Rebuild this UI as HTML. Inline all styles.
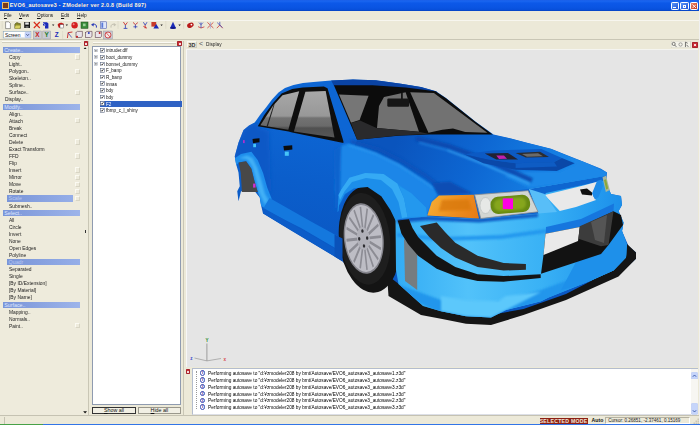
<!DOCTYPE html>
<html><head><meta charset="utf-8"><title>ZModeler</title>
<style>
html,body{margin:0;padding:0;}
body{width:700px;height:425px;overflow:hidden;background:#ECE9D8;position:relative;font-family:"Liberation Sans",sans-serif;font-size:5.3px;color:#111;line-height:6px;}
div{position:absolute;box-sizing:border-box;white-space:nowrap;}
.sv{position:absolute;}
u{text-decoration-thickness:0.45px;text-underline-offset:0.6px;}
#title{left:0;top:0;width:700px;height:11px;background:linear-gradient(#1a5ee8 0%,#1a66f0 10%,#0c58e8 28%,#0a55e3 65%,#0850dc 86%,#0542c0 100%);}
#title .tx{left:9.7px;top:1.7px;color:#fff;font-weight:bold;font-size:5.5px;letter-spacing:0.2px;line-height:7px;text-shadow:0.4px 0.4px 0 #0a2a80;}
#menu{left:0;top:11px;width:700px;height:8.5px;background:#ECE9D8;}
#menu span{position:absolute;top:1.2px;font-size:5.6px;transform:scaleX(.84);transform-origin:0 0;}
#tb1{left:0;top:19.5px;width:700px;height:10.5px;background:#ECE9D8;border-top:0.5px solid #f7f6ef;}
#tb2{left:0;top:30px;width:700px;height:10px;background:#ECE9D8;border-bottom:0.5px solid #c9c6b5;}
#leftp{left:0;top:40px;width:88px;height:375px;background:#EEEBDC;}
.hd{left:2.5px;width:77.5px;height:6.2px;background:linear-gradient(90deg,#7a95d8,#9db4ea);color:#dfe8ff;padding-left:1.8px;font-size:5.3px;line-height:6.2px;}
.hl{left:6.5px;height:6.2px;background:linear-gradient(90deg,#7a95d8,#95aee8);color:#b9c9f2;padding-left:2.1px;font-size:5.3px;line-height:6.2px;}
.it{height:6.2px;line-height:6.2px;font-size:5.5px;color:#1a1a1a;transform:scaleX(.89);transform-origin:0 0;}
.sb{left:74.8px;width:5.4px;height:5.4px;border:0.5px solid #d8d5c4;border-top-color:#fbfaf2;border-left-color:#fbfaf2;background:#EEEBDC;}
#tree{left:91.8px;top:46.4px;width:89.7px;height:358.6px;background:#fff;border:0.5px solid #8f9bb0;}
.tsel{left:6.8px;width:82.2px;height:6.4px;background:#2f62c4;}
.tex{left:1.2px;width:3.6px;height:3.6px;border:0.5px solid #8a97ad;background:#fff;}
.tex:after{content:"";position:absolute;left:0.6px;top:1px;width:1.5px;height:0.6px;background:#333;}
.tcb{left:7.6px;width:4.4px;height:4.4px;border:0.5px solid #4a5a7a;background:#fff;}
.tcb:after{content:"";position:absolute;left:1.1px;top:0px;width:1px;height:2.2px;border-right:0.7px solid #111;border-bottom:0.7px solid #111;transform:rotate(42deg);}
.tt{left:13px;font-size:5.5px;line-height:6.2px;color:#111;transform:scaleX(.83);transform-origin:0 0;}
.tw{color:#fff;}
.xbtn{width:4.6px;height:4.6px;background:#cc3038;border:0.5px solid #a8242c;border-radius:0.8px;}
.xbtn:after{content:"";position:absolute;left:0.8px;top:0.8px;width:2px;height:2px;background:#fff;opacity:.85;border-radius:.3px}
.btn{height:6.6px;background:#f1efe4;border:0.5px solid #9a988c;font-size:5.3px;line-height:5.6px;text-align:center;color:#111;}
#vp{left:185.5px;top:48.5px;width:512.5px;height:318.5px;overflow:hidden;background:#e5e5e5;border-left:0.5px solid #f6f6f6;border-top:0.8px solid #f4f4f0;}
#vph{left:185.5px;top:40.5px;width:512.5px;height:8px;background:#ECE9D8;}
#log{left:191.5px;top:368.3px;width:506px;height:46.8px;background:#fff;border:0.5px solid #b4bdce;border-bottom-color:#dcdfe6;}
.li{left:7.4px;width:5.4px;height:5.4px;border:0.6px solid #3a4ab4;border-radius:50%;color:#1a2a90;font-size:4.6px;line-height:4.2px;text-align:center;font-weight:bold;background:#fff;}
.lt{left:15.8px;font-size:5.3px;line-height:6.2px;color:#000;transform:scaleX(.9);transform-origin:0 0;}
#status{left:0;top:415.2px;width:700px;height:8px;background:#ECE9D8;border-top:0.5px solid #c5c2b2;}
#task{left:0;top:423.5px;width:700px;height:1.5px;background:linear-gradient(#3f8cf3,#245edb);}
</style></head><body>
<div id="title"><div style="left:2px;top:2px;width:6.5px;height:6.5px;background:#7a3a1a;border:0.5px solid #e8c070"></div><div class="tx">EVO6_autosave3 - ZModeler ver 2.0.8 (Build 897)</div>
<div style="left:670.6px;top:1.5px;width:8.2px;height:8.2px;border-radius:1.2px;border:0.5px solid #fff;background:linear-gradient(135deg,#5a94f6,#2458d8)"><div style="left:1.6px;top:4.6px;width:2.8px;height:1.1px;background:#fff"></div></div>
<div style="left:680.2px;top:1.5px;width:8.4px;height:8.2px;border-radius:1.2px;border:0.5px solid #fff;background:linear-gradient(135deg,#5a94f6,#2458d8)"><div style="left:1.6px;top:2.3px;width:3px;height:2.8px;border:0.6px solid #fff;border-top-width:1px"></div></div>
<div style="left:689.6px;top:1.5px;width:8.4px;height:8.2px;border-radius:1.2px;border:0.5px solid #fff;background:linear-gradient(135deg,#e8866a,#c8381c)"><svg style="position:absolute;left:1.2px;top:1.2px" width="4.6" height="4.6" viewBox="0 0 4.6 4.6"><path d="M0.5 0.5L4.1 4.1M4.1 0.5L0.5 4.1" stroke="#fff" stroke-width="0.9"/></svg></div>
</div>
<div id="menu"><span style="left:3.6px"><u>F</u>ile</span><span style="left:19px"><u>V</u>iew</span><span style="left:36.5px"><u>O</u>ptions</span><span style="left:60.5px"><u>E</u>dit</span><span style="left:76.5px"><u>H</u>elp</span></div>
<div id="tb1"></div><div id="tb2"></div>
<svg style="position:absolute;left:0;top:19px" width="232" height="22" viewBox="0 19 232 22">
<g fill="none" stroke="#b9b6a6" stroke-width="0.5" stroke-dasharray="0.6 0.6"><path d="M2.2 21.5v7.5M118 21.5v7.5M165.8 21.5v7.5M183.6 21.5v7.5M2.2 31.5v7.5M62.6 31.5v7.5"/></g>
<!-- toolbar 1 -->
<path d="M5.6 21.8h3.2l1.6 1.6v5.2H5.6z" fill="#fff" stroke="#444" stroke-width="0.5"/>
<path d="M14.8 24.2l1.4-1.4h2l.6.8h1.6v4.8h-5.6z" fill="#8a8a2a" stroke="#3a3a10" stroke-width="0.5"/><path d="M15.6 25.6h5l-1 2.8h-4.8z" fill="#d8d060"/>
<rect x="24.2" y="22" width="5.8" height="6" fill="#1a1a1a"/><rect x="25.2" y="22.4" width="3.6" height="2.2" fill="#e8e8e8"/><rect x="25.6" y="26" width="3" height="2" fill="#666"/>
<path d="M33.8 22l6 6M39.8 22l-6 6" stroke="#d82a1a" stroke-width="1.1"/>
<path d="M43 22.2h4l1.4 1.4v4.8H45v-3h-2z" fill="#1a2ab8"/><path d="M43 23l2.6 2.2" stroke="#fff" stroke-width="0.6"/><path d="M52 24.6h2.4l-1.2 1.4z" fill="#222"/>
<path d="M57.6 24.8c1-2.6 4.8-2.8 6.4-.6l-1 3.6h-4.2z" fill="#c81a1a"/><rect x="60" y="24.6" width="3.6" height="3.4" fill="#fff" stroke="#444" stroke-width="0.4"/><path d="M65.6 24.6h2.4l-1.2 1.4z" fill="#222"/>
<circle cx="74.6" cy="25.2" r="3.2" fill="#d42020"/><circle cx="73.6" cy="24.2" r="1" fill="#f08a8a"/>
<rect x="81" y="22" width="7" height="6.4" fill="#3a8a3a" stroke="#1a4a1a" stroke-width="0.5"/><rect x="83" y="23.6" width="2.6" height="2.6" fill="#9ad09a"/>
<path d="M96.4 27.6c.6-2.6-1.4-4-3.6-3.2" fill="none" stroke="#2a3ab8" stroke-width="1"/><path d="M91 24.8l2.6-1.8v3.4z" fill="#2a3ab8"/>
<rect x="100.6" y="21.8" width="6" height="6.8" fill="#dfe6fa" stroke="#3a4aa8" stroke-width="0.5"/><rect x="101.4" y="22.6" width="1.8" height="5.2" fill="#5a7ad8"/>
<path d="M111 27.6c-.6-2.6 1.4-4 3.6-3.2" fill="none" stroke="#c4c1b2" stroke-width="1"/><path d="M116.4 24.8l-2.6-1.8v3.4z" fill="#c4c1b2"/>
<g stroke-width="0.8" fill="none"><path d="M123.4 22l2 3 2-2.6" stroke="#c82020"/><path d="M125.4 25v3.4M123.6 28.400h3.800" stroke="#2a3ab8"/>
<path d="M133 22.400l2.400 2.200 2.400-2" stroke="#c82020"/><path d="M135.400 24.600v3.800M133.400 26.800h4" stroke="#2a3ab8"/>
<path d="M143.400 22.200l1.800 3 1.800-3" stroke="#2a3ab8"/><path d="M145.200 25.200v3.200M143.400 26.400l3.600 1.800" stroke="#c82020"/></g>
<rect x="151.400" y="22" width="4.800" height="4.600" fill="#c83a2a"/><path d="M153.400 28.600l2.800-4.600 2.800 4.600z" fill="#1a2ab8"/><path d="M160.400 24.600h2.400l-1.200 1.400z" fill="#222"/>
<path d="M170 28.200l3-6.400 3 6.400z" fill="#1a2ab8"/><ellipse cx="173" cy="28" rx="3" ry="0.900" fill="#10188a"/><path d="M178.400 24.600h2.400l-1.200 1.400z" fill="#222"/>
<ellipse cx="190.400" cy="25.200" rx="3.400" ry="2.400" fill="#b81a1a" transform="rotate(-25 190.400 25.200)"/><circle cx="191.400" cy="24.600" r="0.900" fill="#fff"/>
<g stroke-width="0.700" fill="none"><path d="M198 26.600l3 1.400 3.400-1.200" stroke="#c82020"/><path d="M201 28v-5.600M199 22.600l2 2 2-2" stroke="#2a3ab8"/>
<path d="M207.400 22.400l6 5.600M213.400 22.400l-6 5.600" stroke="#c82020"/><path d="M210.400 22v6.600" stroke="#9aa2d8"/>
<path d="M216.800 28.200l3-3.200 3 3.200" stroke="#c82020"/><path d="M219.800 25v-3.200M217.200 22.600l5.200 5" stroke="#2a3ab8"/></g>
<!-- toolbar 2 -->
<rect x="3.500" y="31.600" width="27.400" height="6.400" fill="#fff" stroke="#7f9db9" stroke-width="0.500"/>
<rect x="25" y="32.200" width="5.400" height="5.200" rx="0.800" fill="#c6d4fb" stroke="#9ab0e8" stroke-width="0.400"/><path d="M26.400 34.200l1.300 1.400 1.300-1.400" stroke="#2a3a6a" stroke-width="0.800" fill="none"/>
<text x="5" y="36.500" font-family="Liberation Sans, sans-serif" font-size="5.200" fill="#111" textLength="15.500" lengthAdjust="spacingAndGlyphs">Screen</text>
<rect x="33.400" y="31" width="7.800" height="8" fill="#c9cad2" stroke="#8a8a96" stroke-width="0.400"/>
<rect x="42.800" y="31" width="7.800" height="8" fill="#c9cad2" stroke="#8a8a96" stroke-width="0.400"/>
<rect x="103.600" y="31" width="8.800" height="8" fill="#c9cad2" stroke="#8a8a96" stroke-width="0.400"/>
<g font-family="Liberation Sans, sans-serif" font-size="6.400" font-weight="bold" text-anchor="middle"><text x="37.300" y="37.400" fill="#c81a1a">X</text><text x="46.700" y="37.400" fill="#1a7a2a">Y</text><text x="56.600" y="37.400" fill="#1a2ab8">Z</text></g>
<path d="M67.400 38l.800-5.400 4.200-.600" stroke="#c82020" stroke-width="0.900" fill="none"/><path d="M68 32.800l3.800 4.800" stroke="#2a3ab8" stroke-width="0.700"/>
<g fill="#e9e4ea" stroke="#5a3a4a" stroke-width="0.600"><rect x="76" y="32.600" width="5" height="5"/><path d="M76 32.600l1.400-1.200h5v5l-1.400 1.200"/>
<rect x="85.600" y="32.600" width="5" height="5"/><path d="M85.600 32.600l1.400-1.200h5v5l-1.400 1.200"/>
<rect x="95.200" y="32.600" width="5" height="5"/><path d="M95.200 32.600l1.400-1.200h5v5l-1.400 1.200"/></g>
<circle cx="108" cy="35" r="3" fill="#f6e6e6" stroke="#c83030" stroke-width="0.800"/><path d="M106 32.600l4.200 4.600" stroke="#c83030" stroke-width="0.700"/>
<circle cx="77" cy="36.800" r="1" fill="#c82020"/><circle cx="88.800" cy="33" r="1" fill="#2a3ab8"/><circle cx="99.600" cy="33" r="1" fill="#c82020"/>
</svg>

<div id="leftp">
<div style="left:0;top:0;width:83px;height:375px">
</div>
</div>
<div style="left:0;top:0;width:88px;height:420px">
<div class="hd" style="top:47.00px">Create..</div>
<div class="it" style="top:54.07px;left:8.6px">Copy</div>
<div class="sb" style="top:54.37px"></div>
<div class="it" style="top:61.14px;left:8.6px">Light..</div>
<div class="it" style="top:68.21px;left:8.6px">Polygon..</div>
<div class="sb" style="top:68.51px"></div>
<div class="it" style="top:75.28px;left:8.6px">Skeleton..</div>
<div class="it" style="top:82.35px;left:8.6px">Spline..</div>
<div class="it" style="top:89.42px;left:8.6px">Surface..</div>
<div class="sb" style="top:89.72px"></div>
<div class="it" style="top:96.49px;left:4.8px">Display..</div>
<div class="hd" style="top:103.56px">Modify..</div>
<div class="it" style="top:110.63px;left:8.6px">Align..</div>
<div class="it" style="top:117.70px;left:8.6px">Attach</div>
<div class="sb" style="top:118.00px"></div>
<div class="it" style="top:124.77px;left:8.6px">Break</div>
<div class="it" style="top:131.84px;left:8.6px">Connect</div>
<div class="it" style="top:138.91px;left:8.6px">Delete</div>
<div class="sb" style="top:139.21px"></div>
<div class="it" style="top:145.98px;left:8.6px">Exact Transform</div>
<div class="it" style="top:153.05px;left:8.6px">FFD</div>
<div class="sb" style="top:153.35px"></div>
<div class="it" style="top:160.12px;left:8.6px">Flip</div>
<div class="it" style="top:167.19px;left:8.6px">Insert</div>
<div class="sb" style="top:167.49px"></div>
<div class="it" style="top:174.26px;left:8.6px">Mirror</div>
<div class="sb" style="top:174.56px"></div>
<div class="it" style="top:181.33px;left:8.6px">Move</div>
<div class="sb" style="top:181.63px"></div>
<div class="it" style="top:188.40px;left:8.6px">Rotate</div>
<div class="sb" style="top:188.70px"></div>
<div class="hl" style="top:195.47px;width:66.5px">Scale</div>
<div class="sb" style="top:195.77px"></div>
<div class="it" style="top:202.54px;left:8.6px">Submesh..</div>
<div class="hd" style="top:209.61px">Select..</div>
<div class="it" style="top:216.68px;left:8.6px">All</div>
<div class="it" style="top:223.75px;left:8.6px">Circle</div>
<div class="it" style="top:230.82px;left:8.6px">Invert</div>
<div class="it" style="top:237.89px;left:8.6px">None</div>
<div class="it" style="top:244.96px;left:8.6px">Open Edges</div>
<div class="it" style="top:252.03px;left:8.6px">Polyline</div>
<div class="hl" style="top:259.10px;width:73.5px">Quadr</div>
<div class="it" style="top:266.17px;left:8.6px">Separated</div>
<div class="it" style="top:273.24px;left:8.6px">Single</div>
<div class="it" style="top:280.31px;left:8.6px">[By ID/Extension]</div>
<div class="it" style="top:287.38px;left:8.6px">[By Material]</div>
<div class="it" style="top:294.45px;left:8.6px">[By Name]</div>
<div class="hd" style="top:301.52px">Surface..</div>
<div class="it" style="top:308.59px;left:8.6px">Mapping..</div>
<div class="it" style="top:315.66px;left:8.6px">Normals..</div>
<div class="it" style="top:322.73px;left:8.6px">Paint..</div>
<div class="sb" style="top:323.03px"></div>
<div class="xbtn" style="left:83.6px;top:41.3px"></div>
<svg class="sv" style="left:83.2px;top:46.6px" width="4.2" height="2.8" viewBox="0 0 4.2 2.8"><path d="M0.200 2.600L2.100 0.300L4 2.600Z" fill="#111"/></svg>
<div style="left:2px;top:41.2px;width:79px;height:1.6px;border-top:0.5px solid #fbfaf4;border-bottom:0.5px solid #d2cfbe"></div>
<div style="left:93px;top:41.6px;width:83px;height:1.6px;border-top:0.5px solid #fbfaf4;border-bottom:0.5px solid #d2cfbe"></div>
<svg class="sv" style="left:83.2px;top:410.8px" width="4.2" height="2.8" viewBox="0 0 4.2 2.8"><path d="M0.200 0.300L2.100 2.600L4 0.300Z" fill="#111"/></svg>
<div style="left:84.6px;top:229.6px;width:1.6px;height:3.2px;background:#333"></div>
<div style="left:88.2px;top:40.5px;width:1.2px;height:374px;background:#f8f7f0;border-right:0.5px solid #c9c6b5"></div>
</div>
<div id="tree">
<svg class="sv" style="left:1.2px;top:1.30px" width="3.8" height="3.8" viewBox="0 0 3.8 3.8"><rect x="0.25" y="0.25" width="3.3" height="3.3" fill="#fff" stroke="#9aa4b6" stroke-width="0.5"/><path d="M1 1.9h1.8M1.9 1v1.8" stroke="#333" stroke-width="0.5"/></svg>
<svg class="sv" style="left:7.6px;top:0.90px" width="4.6" height="4.6" viewBox="0 0 4.6 4.6"><rect x="0.3" y="0.3" width="4" height="4" fill="#fff" stroke="#56637e" stroke-width="0.55"/><path d="M1.1 2.3L1.9 3.3L3.5 1.2" stroke="#111" stroke-width="0.75" fill="none"/></svg>
<div class="tt" style="top:0.10px">intruder.dff</div>
<svg class="sv" style="left:1.2px;top:7.94px" width="3.8" height="3.8" viewBox="0 0 3.8 3.8"><rect x="0.25" y="0.25" width="3.3" height="3.3" fill="#fff" stroke="#9aa4b6" stroke-width="0.5"/><path d="M1 1.9h1.8M1.9 1v1.8" stroke="#333" stroke-width="0.5"/></svg>
<svg class="sv" style="left:7.6px;top:7.54px" width="4.6" height="4.6" viewBox="0 0 4.6 4.6"><rect x="0.3" y="0.3" width="4" height="4" fill="#fff" stroke="#56637e" stroke-width="0.55"/><path d="M1.1 2.3L1.9 3.3L3.5 1.2" stroke="#111" stroke-width="0.75" fill="none"/></svg>
<div class="tt" style="top:6.74px">boot_dummy</div>
<svg class="sv" style="left:1.2px;top:14.58px" width="3.8" height="3.8" viewBox="0 0 3.8 3.8"><rect x="0.25" y="0.25" width="3.3" height="3.3" fill="#fff" stroke="#9aa4b6" stroke-width="0.5"/><path d="M1 1.9h1.8M1.9 1v1.8" stroke="#333" stroke-width="0.5"/></svg>
<svg class="sv" style="left:7.6px;top:14.18px" width="4.6" height="4.6" viewBox="0 0 4.6 4.6"><rect x="0.3" y="0.3" width="4" height="4" fill="#fff" stroke="#56637e" stroke-width="0.55"/><path d="M1.1 2.3L1.9 3.3L3.5 1.2" stroke="#111" stroke-width="0.75" fill="none"/></svg>
<div class="tt" style="top:13.38px">bonnet_dummy</div>
<svg class="sv" style="left:7.6px;top:20.82px" width="4.6" height="4.6" viewBox="0 0 4.6 4.6"><rect x="0.3" y="0.3" width="4" height="4" fill="#fff" stroke="#56637e" stroke-width="0.55"/><path d="M1.1 2.3L1.9 3.3L3.5 1.2" stroke="#111" stroke-width="0.75" fill="none"/></svg>
<div class="tt" style="top:20.02px">F_banp</div>
<svg class="sv" style="left:7.6px;top:27.46px" width="4.6" height="4.6" viewBox="0 0 4.6 4.6"><rect x="0.3" y="0.3" width="4" height="4" fill="#fff" stroke="#56637e" stroke-width="0.55"/><path d="M1.1 2.3L1.9 3.3L3.5 1.2" stroke="#111" stroke-width="0.75" fill="none"/></svg>
<div class="tt" style="top:26.66px">R_banp</div>
<svg class="sv" style="left:7.6px;top:34.10px" width="4.6" height="4.6" viewBox="0 0 4.6 4.6"><rect x="0.3" y="0.3" width="4" height="4" fill="#fff" stroke="#56637e" stroke-width="0.55"/><path d="M1.1 2.3L1.9 3.3L3.5 1.2" stroke="#111" stroke-width="0.75" fill="none"/></svg>
<div class="tt" style="top:33.30px">innas</div>
<svg class="sv" style="left:7.6px;top:40.74px" width="4.6" height="4.6" viewBox="0 0 4.6 4.6"><rect x="0.3" y="0.3" width="4" height="4" fill="#fff" stroke="#56637e" stroke-width="0.55"/><path d="M1.1 2.3L1.9 3.3L3.5 1.2" stroke="#111" stroke-width="0.75" fill="none"/></svg>
<div class="tt" style="top:39.94px">bdy</div>
<svg class="sv" style="left:7.6px;top:47.38px" width="4.6" height="4.6" viewBox="0 0 4.6 4.6"><rect x="0.3" y="0.3" width="4" height="4" fill="#fff" stroke="#56637e" stroke-width="0.55"/><path d="M1.1 2.3L1.9 3.3L3.5 1.2" stroke="#111" stroke-width="0.75" fill="none"/></svg>
<div class="tt" style="top:46.58px">bdy</div>
<div class="tsel" style="top:53.12px"></div>
<svg class="sv" style="left:7.6px;top:54.02px" width="4.6" height="4.6" viewBox="0 0 4.6 4.6"><rect x="0.3" y="0.3" width="4" height="4" fill="#fff" stroke="#56637e" stroke-width="0.55"/><path d="M1.1 2.3L1.9 3.3L3.5 1.2" stroke="#111" stroke-width="0.75" fill="none"/></svg>
<div class="tt tw" style="top:53.22px">F2</div>
<svg class="sv" style="left:7.6px;top:60.66px" width="4.6" height="4.6" viewBox="0 0 4.6 4.6"><rect x="0.3" y="0.3" width="4" height="4" fill="#fff" stroke="#56637e" stroke-width="0.55"/><path d="M1.1 2.3L1.9 3.3L3.5 1.2" stroke="#111" stroke-width="0.75" fill="none"/></svg>
<div class="tt" style="top:59.86px">fbmp_c_l_shiny</div>
</div>
<div class="xbtn" style="left:177.3px;top:41.4px"></div>
<div class="btn" style="left:92.3px;top:407.3px;width:43.4px;border:0.8px solid #333"><u>S</u>how all</div>
<div class="btn" style="left:137.7px;top:407.3px;width:43.4px"><u>H</u>ide all</div>
<div style="left:182.6px;top:40.5px;width:1.4px;height:374px;background:#f8f7f0;border-right:0.5px solid #c9c6b5"></div>
<div id="vph">
<div style="left:1.6px;top:0.6px;width:9.6px;height:6.6px;border:0.5px solid #f8f8f0;border-right-color:#d0cdbd;border-bottom-color:#d0cdbd;font-weight:bold;font-size:5.4px;line-height:6px;text-align:center;color:#333">3D</div>
<div style="left:13.4px;top:0.4px;font-size:7px;color:#555;line-height:6.6px">&lt;</div>
<div style="left:20.2px;top:0.9px;font-size:5.5px;color:#222;line-height:6px;transform:scaleX(.86);transform-origin:0 0">Display</div>
<svg style="position:absolute;left:485.3px;top:0.6px" width="20" height="7.2" viewBox="0 0 18 6.4"><rect x="0" y="0" width="17.6" height="6.2" fill="#f4f3ea" stroke="#c0bdae" stroke-width="0.4"/><circle cx="2.4" cy="2.6" r="1.4" fill="none" stroke="#444" stroke-width="0.6"/><path d="M3.4 3.7L4.8 5.2" stroke="#444" stroke-width="0.7"/><circle cx="8.6" cy="3.1" r="1.5" fill="none" stroke="#777" stroke-width="0.6"/><path d="M13 1v4.4M13 1l2 1M14 3.4l1.6 1.8" stroke="#333" stroke-width="0.6" fill="none"/></svg>
<div class="xbtn" style="left:506.6px;top:1.8px;width:5.6px;height:5.4px"></div>
</div>
<div id="vp">
<svg style="position:absolute;left:-186px;top:-49.3px" width="700" height="425" viewBox="0 0 700 425">
<defs>
<linearGradient id="gSide" gradientUnits="userSpaceOnUse" x1="300" y1="120" x2="280" y2="240"><stop offset="0" stop-color="#0d66d4"/><stop offset="0.5" stop-color="#0b5ecb"/><stop offset="1" stop-color="#0a58c4"/></linearGradient>
<linearGradient id="gHood" gradientUnits="userSpaceOnUse" x1="400" y1="130" x2="560" y2="200"><stop offset="0" stop-color="#0a54bd"/><stop offset="0.45" stop-color="#0d66d2"/><stop offset="1" stop-color="#1886e8"/></linearGradient>
<linearGradient id="gBump" gradientUnits="userSpaceOnUse" x1="395" y1="0" x2="635" y2="0"><stop offset="0" stop-color="#33acf4"/><stop offset="0.3" stop-color="#52c2fa"/><stop offset="0.6" stop-color="#3ab2f5"/><stop offset="0.85" stop-color="#2399ee"/><stop offset="1" stop-color="#1888e6"/></linearGradient>
<linearGradient id="gGlassS" gradientUnits="userSpaceOnUse" x1="0" y1="90" x2="0" y2="140"><stop offset="0" stop-color="#a8a8a8"/><stop offset="0.52" stop-color="#989898"/><stop offset="0.56" stop-color="#727272"/><stop offset="0.72" stop-color="#6a6a6a"/><stop offset="0.76" stop-color="#505050"/><stop offset="1" stop-color="#585858"/></linearGradient>
<radialGradient id="gRim" cx="0.5" cy="0.5" r="0.5"><stop offset="0" stop-color="#85858d"/><stop offset="0.25" stop-color="#b4b4bc"/><stop offset="1" stop-color="#a6a6ae"/></radialGradient>
<filter id="b2" x="-20%" y="-20%" width="140%" height="140%"><feGaussianBlur stdDeviation="2"/></filter>
<filter id="b4" x="-30%" y="-30%" width="160%" height="160%"><feGaussianBlur stdDeviation="4"/></filter>
<filter id="b1" x="-20%" y="-20%" width="140%" height="140%"><feGaussianBlur stdDeviation="0.8"/></filter>
<path id="pBody" d="M233.750 156.250L237.500 142.500L242.500 130L248 125.500L253.750 122.500L259 115L265 107.500L271 99.500L277.500 92.500L284 88L292.500 85L302 83L312.500 82L330 80.500L352 79.600L375 80.300L400 83.750L420 87L435 91.250L445 98L460 110L475 122L492.500 134.500L510 138.500L525 142.500L550 148.750L575 158.750L600 168.750L606 172.500L605.500 178L606 185L610 194L620 196L621 205L617.500 211L622.500 222.500L621 231L627.500 246L635 252.500L635 258.750L617.500 275L565 298L522.500 313L490 322L465 321L440 316L420 313L397 300L390 285L376 280L360 280L341 261L290 230.500L262 213.500L260 205L258.750 197.500L253.750 191.250L240 191.250L237.500 201.250L236.250 191.250L238.750 186.250L237.500 172.500L235 163.750Z"/>
<path id="pBump" d="M394.500 219.500L426 216.500L478 219L537.500 213.500L528 189L604 176L606 185L610 194L620 196L621 205L617.500 211L622.500 222.500L621 231L626 245L625 257.500L612.500 270.500L590 280.500L547.500 297.500L540 301.250L505 310L490 317.500L465 316.250L440 311.250L422 306L397.500 284L395 270Z"/>
<clipPath id="cBody"><use href="#pBody"/></clipPath>
<clipPath id="cBump"><use href="#pBump"/></clipPath>
<linearGradient id="gInd" gradientUnits="userSpaceOnUse" x1="430" y1="196" x2="476" y2="218"><stop offset="0" stop-color="#f6ac34"/><stop offset="0.5" stop-color="#ee9020"/><stop offset="1" stop-color="#e67c16"/></linearGradient>
</defs>
<use href="#pBody" fill="url(#gSide)"/>
<g clip-path="url(#cBody)">
<!-- roof darker -->
<path d="M330 80L352 79L375 80L400 83L420 86.500L436 91L436 93L405 89L371 86L333 86Z" fill="#0a43a4"/>
<!-- rear quarter darker -->
<path d="M232 160L238 140L244 128L256 122L258 128L268 131L270 190L262 205L258 190L250 158L243 155Z" fill="#0b59c6" filter="url(#b2)"/>
<!-- rear flare highlight -->
<path d="M232.500 159.200L240 154L250.400 151.800L256.800 160.300L262.100 173L266.300 187.800L270.600 198.400L266 210L259 205L258.750 197.500L256.800 192.100L253.600 181.500L250.400 168.800L245.100 161.300L237.700 162.400L235 166Z" fill="#1e8eec"/>
<path d="M238 158L246 155.500L251.500 158L256.500 168L260.500 181L264 194L267.500 200L264 205L258.500 193.500L255 180L251.500 167L246.500 159.500Z" fill="#42b0f6" filter="url(#b1)"/>
<path d="M262 209L268.600 198L310 221.500L341 238.500L341 252L300 228Z" fill="#1478de"/>
<path d="M262 213.500L262.500 208L300 229L341 252.500L341 261Z" fill="#0c5cc8"/>
<!-- hood -->
<path d="M356 139.400L397 135.600L428 134.300L488.400 134.300L510 138.500L550 148.750L606 172.500L604 176L528 189L474 195L437.500 195.500L431 202.500L426 216L396 222L386 205L372 190L352 184L340 190Z" fill="url(#gHood)"/>
<!-- fender bright -->
<path d="M346 143.700L360 147L375.700 152.900L398.600 164.300L421.400 179.100L432.900 187.100L437.400 195L431 202.500L426 216.500L396 221L389 210L380 196L366 187L353 188L343.700 194L338 205L334 190L336 160L340 146Z" fill="#1a86e8" filter="url(#b1)"/>
<path d="M350 141.500L376 148.500L400 160L424 175L436 184L440 190" stroke="#0a52ba" stroke-width="3.500" fill="none" filter="url(#b1)" opacity="0.850"/>
<path d="M347 144.700L375 153.900L398 165.300L421 180.100L432.500 188.100" stroke="#2a98f0" stroke-width="1.600" fill="none" filter="url(#b1)"/>
<path d="M430.600 183L449 181.400L472 193.500L437.600 195.300Z" fill="#0a4eb4" filter="url(#b1)"/>
<path d="M333 150L340 146L339 200L334 212Z" fill="#0d64ce" filter="url(#b1)"/>
<!-- hood right bright -->
<path d="M503 176L520 172L557 172L576 164L566 157L582 160L606 172.500L604 177L528.700 188Z" fill="#1c88e8" filter="url(#b1)"/>
<!-- hood ridge -->
<path d="M415 138.500L448 146.500L484 159.500L531 180.500" stroke="#0a4aae" stroke-width="5" fill="none" filter="url(#b1)" opacity="0.9"/>
<path d="M418 142.500L446 150" stroke="#2a90ec" stroke-width="2" fill="none" filter="url(#b1)" opacity="0.6"/><path d="M446 150L481 163.300L528.700 183.900" stroke="#36a0f2" stroke-width="1.800" fill="none" filter="url(#b1)"/>
<!-- scoop -->
<path d="M463 154.300L491.400 150.400L540.300 149.100L560.900 158.100L553.100 162L514.600 163.300L486.300 159.400Z" fill="#0c5ac4"/>
<path d="M486.300 159.400L514.600 163.300L553.100 162L560.900 158.100L573.700 163.300L555.700 171L514.600 169.700L482.400 163.300L463 154.300Z" fill="#0a48a8"/>
<path d="M514.600 163.300L553.100 162L556 166.500L514.600 168Z" fill="#0e5cc4"/>
<path d="M483.700 153.500L506.900 153L517.100 159.400L495.300 159.400Z" fill="#222232"/><path d="M495.300 155.600L503 155.400L506 158.700L498 158.900Z" fill="#c020b0"/>
<path d="M514.600 153L539 151.700L548 156.900L524.900 157.600Z" fill="#2c2c30"/><path d="M521 154L537 153.200L542 156.200L526 156.800Z" fill="#6a6a6a"/>
</g>
<!-- windshield -->
<path d="M332.900 85.200L371.400 85.200L404.900 87.600L434.400 91.200L445 98.200L460 110.200L475 122.200L491.700 134.600L428 134.600L397 135.800L358.600 139.400L356 139.400Z" fill="#0c0c0c"/>
<path d="M338 94.400L367.600 95.700L358.600 120L350 122.700Z" fill="#767676"/>
<path d="M383 97L390 95.500L404.600 92.300L418 131.700L376 128L378 106Z" fill="#707070"/>
<path d="M409.200 92.200L432.900 93L486.400 132.800L464.200 132L452 128.600L441.300 129.700L427.500 132.800Z" fill="#727272"/>
<path d="M350 123L359 120.500L375.500 128L418 131.700L428 134L397 135.600L358.600 139.400L356 139.400Z" fill="#2a2a2c"/>
<rect x="386.300" y="98.600" width="21.800" height="8.200" rx="1.200" fill="#161616"/><rect x="400" y="93" width="1.800" height="6" fill="#161616"/>
<!-- side windows -->
<path d="M256.800 126.200L262.900 115.600L271.800 103.200L280.600 93.500L291.200 89.100L301.800 87.400L322.900 86.500L326.500 88.200L342.400 141.200L342.400 143L291.200 132.400L287.600 131.500Z" fill="#0e0e0e"/>
<path d="M259.400 125.300L271.800 105.900L281.500 95.300L298.200 91.200L287.300 129.700Z" fill="url(#gGlassS)"/>
<path d="M265.500 126.500L266.700 126.700L273.600 104.200L272.600 104.800Z" fill="#222"/>
<path d="M304.400 91.800L324.700 90.900L333.500 137.600L292.900 131.500Z" fill="url(#gGlassS)"/>
<!-- door handles -->
<path d="M251.500 139L258.500 138.200L258.500 142.200L252 143.200Z" fill="#0c0c0c"/><rect x="252.200" y="143.800" width="2.800" height="3.400" fill="#46c4f8"/>
<path d="M282.400 146L291.200 145.200L291.400 149.600L283 150.600Z" fill="#0c0c0c"/><rect x="283.800" y="151.600" width="4" height="4.200" fill="#46c4f8"/>
<rect x="242" y="140.100" width="1.700" height="3" fill="#b030d0"/>
<!-- rear wheel well -->
<path d="M237.700 162.400L245.100 161.300L250.400 168.800L253.600 181.500L256.800 192.100L240.900 192.100L239.800 173Z" fill="#484848"/>
<rect x="252.100" y="183.600" width="2.400" height="4" fill="#d030d0"/>
<!-- splitter (black) -->
<path d="M386 275L397.500 283.750L422.500 304L465 312L490 315L522.500 309L565 294L615 268L626 244L635 252.500L635 258.750L617.500 276.500L565 300L522.500 315L490 325L465 323.750L440 318.750L420 315L387.500 296Z" fill="#151515"/>
<!-- tire + wheel -->
<g transform="rotate(-6 367 239)">
<ellipse cx="368.500" cy="239.500" rx="30.500" ry="53.500" fill="#141414"/>
<ellipse cx="364" cy="238.500" rx="25" ry="46" fill="#1e1e1e"/>
<ellipse cx="362.800" cy="238" rx="19.800" ry="35.400" fill="#85858d"/>
<ellipse cx="362.800" cy="238" rx="18.400" ry="33.600" fill="#bdbdc5"/>
<g stroke="#8c8c94" fill="none" transform="translate(362.800 238) scale(0.525 0.96)">
<path d="M0 -33V-11M0 33V11M-33 0H-11M33 0H11M23.300 -23.300L7.800 -7.800M-23.300 23.300L-7.800 7.800M23.300 23.300L7.800 7.800M-23.300 -23.300L-7.800 -7.800M12.600 -30.500L4.200 -10.200M-12.600 30.500L-4.200 10.200M30.500 12.600L10.200 4.200M-30.500 -12.600L-10.200 -4.200M-12.600 -30.500L-4.200 -10.200M12.600 30.500L4.200 10.200M30.500 -12.600L10.200 -4.200M-30.500 12.600L-10.200 4.200" stroke-width="3"/>
</g>
<ellipse cx="362.300" cy="238" rx="6.200" ry="11.500" fill="#b0b0b8"/>
<g fill="#2e2e32"><ellipse cx="362.300" cy="230.500" rx="1.200" ry="1.800"/><ellipse cx="362.300" cy="245.500" rx="1.200" ry="1.800"/><ellipse cx="358.300" cy="238" rx="1.200" ry="1.800"/><ellipse cx="366.300" cy="238" rx="1.200" ry="1.800"/></g>
</g>
<!-- skirt front edge over tire -->
<path d="M333.500 234.500L341.500 238.500L341.500 261.500L333.500 256.500Z" fill="#0a52ba"/>
<!-- front fender flare over tire -->
<path d="M336.500 212L337.500 195L340.300 189.400L348.300 177.700L364.300 172.900L382.600 174.100L396.300 183.600L410 193L425 207.500L426 216.500L394.500 220.500L389.400 210L380.300 196.300L366.600 187.100L352.900 188.300L343.700 194L338 205.400L337.500 211Z" fill="#1c8eea"/>
<path d="M337.500 195L340.300 189.400L348.300 177.700L364.300 172.900L382.600 174.100L396.300 183.600L403.100 198.600L406.600 216.900L401 218L397.500 202L391 189L380 180L365 178L351 182L343.500 191.500L339 200Z" fill="#35aaf4"/>
<path d="M406.600 216.900L403.100 198.600L398 186L410 193L425 207.500L426 216.500Z" fill="#2398ee"/>
<!-- bumper -->
<use href="#pBump" fill="url(#gBump)"/>
<g clip-path="url(#cBump)">
<path d="M396 216L426 216L478 218.500L537 213.500L537 217L478 222.500L426 220.500L396 223Z" fill="#0d5cc4" filter="url(#b1)"/>
<path d="M396 233L440 237L500 235L545 229L545 233L500 239L440 241L396 237Z" fill="#2498ee" filter="url(#b1)"/>
<path d="M396 284L440 300L490 304L540 290L600 268L630 250L636 256L600 282L540 304L490 320L440 314L396 292Z" fill="#2196ec" filter="url(#b1)"/>
<path d="M606 246L613 211L622 206L630 240L626 262L600 280L560 290L575 262Z" fill="#1e90ea"/>
<path d="M440 296L465 300L497 301L505 296L540 292L505 310L490 317.500L465 316.250L440 311.250Z" fill="#5cc8fb" filter="url(#b1)"/>
<path d="M528 189L604 176L605 180L545 193L540 200Z" fill="#0e66d0"/>
</g>
<!-- mesh -->
<path d="M403 238.800L416.200 251.200L416.200 290L404 281Z" fill="#767c80"/>
<!-- carbon strip 1 -->
<path d="M419 226L435.700 222.500L444 232L454.300 242.700L476.600 255.700L502.600 263.100L524.900 263.900L524.900 269.800L502.600 270.600L476.600 266.900L454.300 257.600L440 248L428.300 237.100Z" fill="#2a2a2a"/>
<!-- black strip 2 -->
<path d="M396.700 220.400L407.900 219.300L411.500 228L417.100 237.100L435.700 255.700L454.300 266.900L476.600 274.300L502.600 276.100L539.700 274.300L539.700 278L502.600 281.700L476.600 281L454.300 276.100L435.700 268.700L417.100 255.700L407 244L400.400 233.400Z" fill="#141414"/>
<path d="M545 227L580 219L613 203.500L612.500 211.250L578.750 227L544.500 233.750Z" fill="#1676de"/>
<!-- lower grille -->
<path d="M544.500 233.750L578.750 227L612.500 211.250L620 215L622 225L607.500 245L600 254L540 273.750L542.500 255Z" fill="#121212"/>
<path d="M544.500 233.750L578.750 227L577 241L542.500 255Z" fill="#e9e9e9"/>
<path d="M578.750 226.250L612.500 211.250L607.500 245L600 246.250L577.500 238.750Z" fill="#3c3c3c"/>
<path d="M590 222L606 215L603 243L594 240Z" fill="#555"/>
<!-- upper grille -->
<path d="M543.750 195L582.500 185.500L597 181.500L594 190L592 196L595 200L575 207L558.750 211Z" fill="#e9e9e9"/>
<path d="M579 189.500L586 188.500L591 192.500L591 195.500L581 194.500Z" fill="#101010"/>
<path d="M591 193.500L596 181L600.500 179.500L602 186L597.500 197L594 199.500Z" fill="#1c8ae8"/><path d="M601.500 177.200L605 175.800L608.800 190L604.800 192Z" fill="#aab69c"/><path d="M603 180L605 179.200L607.200 188.500L605.200 189.500Z" fill="#8aa83a"/><path d="M528 189L543.600 194L556 212L537.500 213.500Z" fill="#58bef8"/>
<!-- indicator + headlight -->
<path d="M426.300 215.400L430.700 202L437.900 195.400L472.700 194.800L478 218.500Z" fill="url(#gInd)"/>
<path d="M441 200L468 199.500L470.500 210L438 211Z" fill="#d9790f" filter="url(#b1)" opacity="0.8"/>
<path d="M473.600 194.800L527.100 190.700L537 211.800L479.800 218.500Z" fill="#d2d6d2" stroke="#8a8e90" stroke-width="0.800"/>
<ellipse cx="484.500" cy="205.500" rx="5.500" ry="8" fill="#e6e8e6" stroke="#b4b8b8" stroke-width="0.600"/>
<rect x="489.600" y="195.800" width="39.500" height="17.200" rx="7.500" fill="#688a12" transform="rotate(-4.500 509.300 204.400)"/>
<rect x="493" y="198.200" width="32" height="12" rx="5.500" fill="#86a61e" transform="rotate(-4.500 509.300 204.400)" filter="url(#b1)"/>
<rect x="501.800" y="198.400" width="10.200" height="10.700" fill="#ff00e4"/>
<!-- axis gizmo -->
<g stroke="#8a8a8a" stroke-width="0.8" fill="none"><path d="M205.900 343.500V360.900"/><path d="M205.900 360.900L193.500 358M205.900 360.900L220 358.500" stroke-width="0.6"/></g>
<g font-family="Liberation Sans, sans-serif" font-weight="bold" font-size="4.600" text-anchor="middle"><text x="206" y="341.600" fill="#1f8a2a">Y</text><text x="190.400" y="360.400" fill="#3a46c8">z</text><text x="223.800" y="360.800" fill="#d84a4a">x</text></g>
</svg>

</div>
<div class="xbtn" style="left:185.6px;top:369.3px"></div>
<div id="log">
<div style="left:3px;top:2px;width:0;height:38px;border-left:0.5px dotted #999"></div>
<div class="li" style="top:1.10px">i</div><div class="lt" style="top:0.90px">Performing autosave to "d:¥zmodeler208 by bmt/Autosave/EVO6_autosave3_autosave1.z3d"</div>
<div class="li" style="top:7.92px">i</div><div class="lt" style="top:7.72px">Performing autosave to "d:¥zmodeler208 by bmt/Autosave/EVO6_autosave3_autosave2.z3d"</div>
<div class="li" style="top:14.74px">i</div><div class="lt" style="top:14.54px">Performing autosave to "d:¥zmodeler208 by bmt/Autosave/EVO6_autosave3_autosave3.z3d"</div>
<div class="li" style="top:21.56px">i</div><div class="lt" style="top:21.36px">Performing autosave to "d:¥zmodeler208 by bmt/Autosave/EVO6_autosave3_autosave1.z3d"</div>
<div class="li" style="top:28.38px">i</div><div class="lt" style="top:28.18px">Performing autosave to "d:¥zmodeler208 by bmt/Autosave/EVO6_autosave3_autosave2.z3d"</div>
<div class="li" style="top:35.20px">i</div><div class="lt" style="top:35.00px">Performing autosave to "d:¥zmodeler208 by bmt/Autosave/EVO6_autosave3_autosave3.z3d"</div>
<div style="left:498.6px;top:0;width:7px;height:46.2px;background:#f7f6f2">
<svg class="sv" style="left:0;top:2.400px" width="7" height="7.600" viewBox="0 0 7 7.600"><rect x="0.300" y="0.300" width="6.400" height="7" rx="1.200" fill="#c6d5fa" stroke="#a9bdf0" stroke-width="0.400"/><path d="M1.900 4.700L3.500 3L5.100 4.700" stroke="#3f5fae" stroke-width="1" fill="none"/></svg>
<svg class="sv" style="left:0;top:33.800px" width="7" height="11.800" viewBox="0 0 7 11.800"><rect x="0.300" y="0.300" width="6.400" height="11.200" rx="1.200" fill="#c6d5fa" stroke="#a9bdf0" stroke-width="0.400"/><path d="M1.900 7.300L3.500 9L5.100 7.300" stroke="#3f5fae" stroke-width="1" fill="none"/></svg>
</div>
</div>
<div id="status">
<div style="left:4px;top:0.5px;width:0.5px;height:7px;background:#c5c2b2"></div>
<div style="left:539.6px;top:1.8px;width:48px;height:6.4px;background:#8c1f14;color:#f4e6d8;font-weight:bold;font-size:5.2px;line-height:6.4px;text-align:center;letter-spacing:0.25px">SELECTED MODE</div>
<div style="left:591.6px;top:1.1px;font-weight:bold;font-size:5.2px;line-height:6px;color:#111">Auto</div>
<div style="left:605.3px;top:1.2px;width:84.5px;height:6.6px;border:0.5px solid #b5b2a2;border-right-color:#fff;border-bottom-color:#fff;font-size:4.55px;line-height:5.6px;padding-left:2px;color:#222">Cursor: 0.26851, -2.37461, 0.15169</div>
<svg style="position:absolute;left:692.5px;top:1.5px" width="6.5" height="6.5" viewBox="0 0 6.5 6.5"><g fill="#b8b5a4"><rect x="4.6" y="0.6" width="1.2" height="1.2"/><rect x="2.6" y="2.6" width="1.2" height="1.2"/><rect x="4.6" y="2.6" width="1.2" height="1.2"/><rect x="0.6" y="4.6" width="1.2" height="1.2"/><rect x="2.6" y="4.6" width="1.2" height="1.2"/><rect x="4.6" y="4.6" width="1.2" height="1.2"/></g></svg>
</div>
<div style="left:698.6px;top:0;width:1.4px;height:423px;background:#f0f0f0"></div>
<div id="task"><div style="left:0;top:0;width:43px;height:2px;background:linear-gradient(#4fa84f,#2f8a2f)"></div></div>
</body></html>
